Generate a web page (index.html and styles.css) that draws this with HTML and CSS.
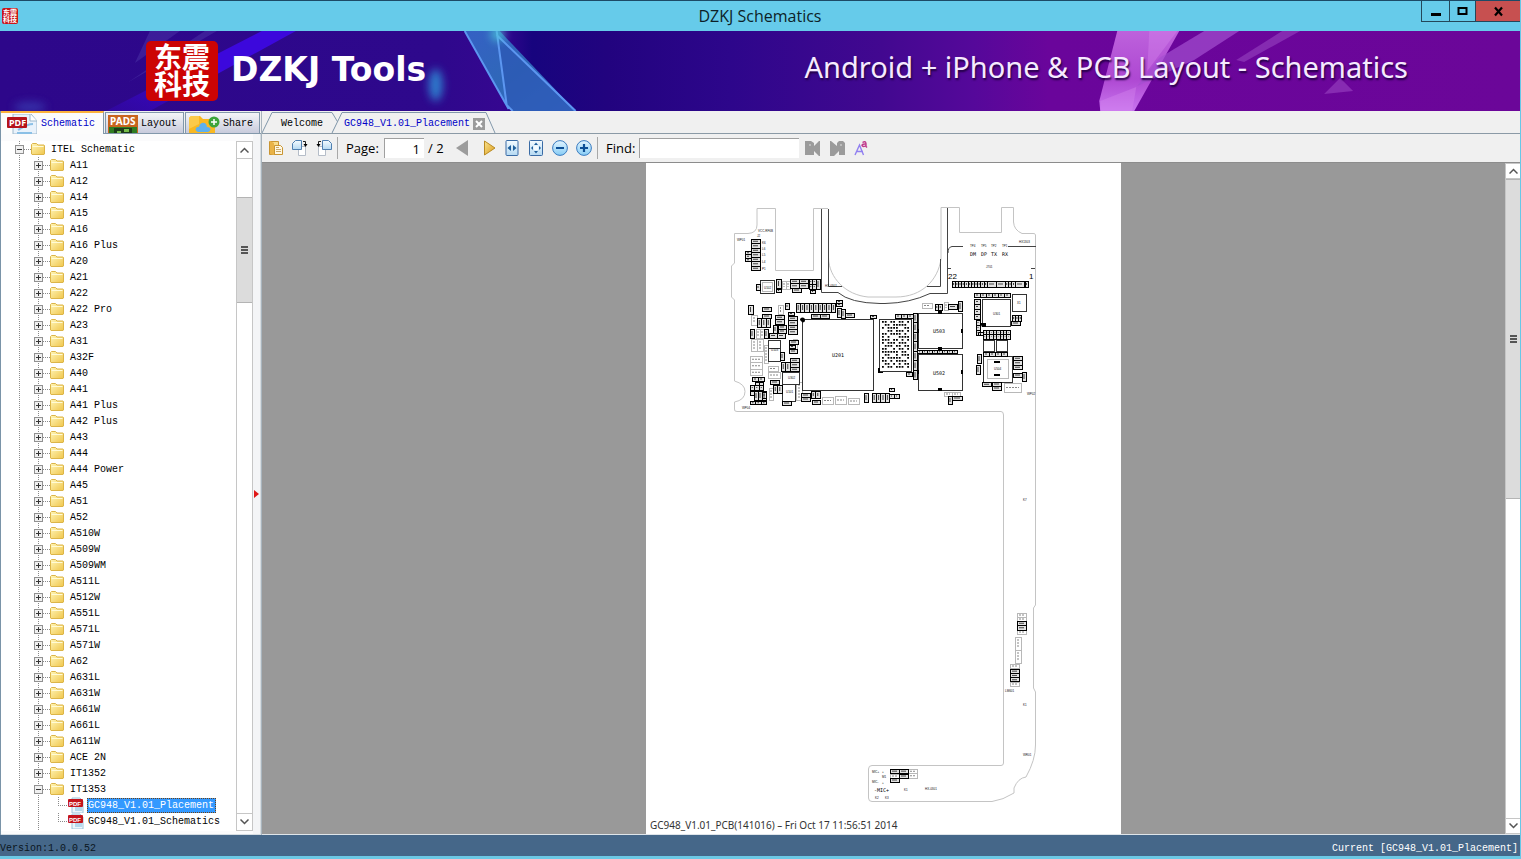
FILE: index.html
```html
<!DOCTYPE html>
<html lang="en">
<head>
<meta charset="utf-8">
<title>DZKJ Schematics</title>
<link rel="stylesheet" href="styles.css">
</head>
<body>
<svg class="defs" aria-hidden="true">
  <defs>
    <linearGradient id="gFolder" x1="0" y1="0" x2="1" y2="1"><stop offset="0" stop-color="#fff6b8"/><stop offset="1" stop-color="#f0c64c"/></linearGradient>
    <linearGradient id="gDoc" x1="0" y1="0" x2="0" y2="1"><stop offset="0" stop-color="#f4fbff"/><stop offset="1" stop-color="#b5d9f2"/></linearGradient>
    <linearGradient id="gBall" x1="0" y1="0" x2="0" y2="1"><stop offset="0" stop-color="#e2f4ff"/><stop offset="1" stop-color="#86ccf5"/></linearGradient>
    <linearGradient id="gPlay" x1="0" y1="0" x2="1" y2="1"><stop offset="0" stop-color="#fbe48e"/><stop offset="1" stop-color="#d99a1c"/></linearGradient>
    <symbol id="folder" viewBox="0 0 14 12"><path d="M.5 11V1.5L1.5.5h4l1.500 1.500h6l.5.5V11l-.5.5H1z" fill="url(#gFolder)" stroke="#dcb548"/><path d="M1.500 3.500h11" stroke="#fffbd8"/></symbol>
    <symbol id="pdf" viewBox="0 0 16 16"><path d="M4 1h8l3 3v12H4z" fill="#edf6fb" stroke="#9cc4dc"/><path d="M7 11h7M7 13h7" stroke="#7dbbe0"/><rect y="2" width="15" height="8" rx="1" fill="#c4141c"/><text x="1" y="9" class="pdf-word">PDF</text></symbol>
  </defs>
</svg>

<header class="titlebar">
  <span class="mini-logo">东震科技</span>
  <h1 class="title">DZKJ Schematics</h1>
  <div class="win-buttons">
    <button class="win-btn" aria-label="Minimize"><svg width="11" height="11"><path d="M1 7h10v3H1z"/></svg></button>
    <button class="win-btn win-max" aria-label="Maximize"><svg width="11" height="11"><path d="M1.500 2h8v6h-8z" fill="none" stroke="#000" stroke-width="2"/></svg></button>
    <button class="win-btn win-close" aria-label="Close"><svg width="11" height="11"><path d="M2 1.500l7 8M9 1.500l-7 8" stroke="#000" stroke-width="2.200"/></svg></button>
  </div>
</header>

<section class="banner">
  <svg class="banner-art" viewBox="0 0 1521 80" preserveAspectRatio="none" aria-hidden="true">
    <defs>
      <linearGradient id="gTri" x1="0" y1="0" x2="1" y2="1"><stop offset="0" stop-color="#3560c4"/><stop offset=".5" stop-color="#2f68b8"/><stop offset="1" stop-color="#3a6fce"/></linearGradient>
      <linearGradient id="gPink" x1="0" y1="0" x2="0" y2="1"><stop offset="0" stop-color="#bd62dc"/><stop offset=".6" stop-color="#ae48d2"/><stop offset="1" stop-color="#c874ee"/></linearGradient>
      <linearGradient id="gBeam" x1="1" y1="0" x2="0" y2="1"><stop offset="0" stop-color="#3c08dc"/><stop offset=".5" stop-color="#3c08dc"/><stop offset="1" stop-color="#3508b8" stop-opacity=".4"/></linearGradient>
      <filter id="blur" x="-2" y="-2" width="5" height="5"><feGaussianBlur stdDeviation="4"/></filter>
    </defs>
    <path d="M262 0h34L150 80h-44z" fill="url(#gBeam)"/>
    <path d="M150 0h30l-45 32zM205 0l-78 52 90-52z" fill="#5a48b4" opacity=".35"/>
    <ellipse cx="436" cy="54" rx="7" ry="16" fill="#2f8fd8" opacity=".85" filter="url(#blur)"/>
    <ellipse cx="30" cy="76" rx="16" ry="5" fill="#3c50c0" opacity=".6" filter="url(#blur)"/>
    <path d="M465 0h35l76 80h-64l-3-3z" fill="url(#gTri)"/>
    <path d="M497 3l10 72 5 5h62z" fill="#2c58b4" opacity=".75"/>
    <path d="M465 0l44 78M497 0l10 74 6 6M497 4l79 76" fill="none" stroke="#5c96f0" stroke-width="2"/>
    <circle cx="498" cy="3" r="7" fill="#4fd2dc" opacity=".75" filter="url(#blur)"/>
    <path d="M1118 0h62l-45 80h-34l-1-10z" fill="url(#gPink)"/>
    <path d="M1101 70l36-14-4 24h-32zM1150 0h28l-30 40z" fill="#db8cf2" opacity=".35"/>
    <path d="M1205 0h35l-45 29-57 26 22-28z" fill="#a450d0" opacity=".7"/>
    <path d="M1283 0h18l-56 31-8-2z" fill="#a050c8" opacity=".5"/>
    <path d="M1341 47l13 13-29 3z" fill="#8f35b8" opacity=".8"/>
  </svg>
  <div class="logo">东震科技</div>
  <strong class="brand">DZKJ Tools</strong>
  <span class="tagline">Android + iPhone &amp; PCB Layout - Schematics</span>
</section>

<main class="workspace">
  <aside class="side">
    <nav class="side-tabs">
      <button class="side-tab active"><svg width="30" height="20" viewBox="0 0 30 20"><path d="M6 0h18l6 7v13H6z" fill="#e9f2fb" stroke="#9db8cc"/><path d="M23 0v7h7" fill="#fff" stroke="#9db8cc"/><path d="M11 16c5-3 9-6 15-6M10 19h15" stroke="#8bc0e6" stroke-width="2" fill="none"/><rect y="3" width="20" height="11" rx="1" fill="#b5121b"/><text x="2" y="12" class="pdf-tab">PDF</text></svg>Schematic</button>
      <button class="side-tab"><svg width="30" height="19" viewBox="0 0 30 19"><path d="M0 0h30v19H0z" fill="#c8641e"/><path d="M1 12h28v7H1z" fill="#2f7d22"/><path d="M6 13h18v6H6z" fill="#1d3b1a"/><path d="M9 16h4v3H9zM16 14h5v3h-5z" fill="#76bd4b"/><text x="2" y="10" class="pads-word">PADS</text></svg>Layout</button>
      <button class="side-tab share"><svg width="32" height="19" viewBox="0 0 32 19"><path d="M1 3l2-2h9l3 3h12v15H1z" fill="#f9b821"/><path d="M1 3l2-2h8v8L1 14z" fill="#fbca4a"/><path d="M10 17c-5-2-1-6 1-5 1-6 8-5 8 0 5 0 4 4 1 5z" fill="#5eb0ee"/><circle cx="26" cy="7" r="5.500" fill="#3da43b"/><path d="M23 7h6M26 4v6" stroke="#fff" stroke-width="1.500"/></svg>Share</button>
    </nav>
    <div class="side-body">
      <div class="tree-wrap">
        <ul class="tree" id="tree"></ul>
        <div class="scroll tree-scroll">
          <button class="arrow" aria-label="Scroll up"><svg width="9" height="6"><path d="M.5 5.500l4-4 4 4" fill="none" stroke="#555" stroke-width="1.500"/></svg></button>
          <div class="track"><div class="thumb"></div></div>
          <button class="arrow" aria-label="Scroll down"><svg width="9" height="6"><path d="M.5.5l4 4 4-4" fill="none" stroke="#555" stroke-width="1.500"/></svg></button>
        </div>
      </div>
      <button class="splitter" aria-label="Collapse panel"><svg width="5" height="8"><path d="M0 0l5 4-5 4z" fill="#e01818"/></svg></button>
    </div>
  </aside>

  <section class="doc">
    <nav class="doc-tabs">
      <button class="doc-tab"><svg class="tab-shape" width="78" height="21" aria-hidden="true"><path d="M0 21L10 .5h60l6 10-6 10.500" fill="#f0f0f0" stroke="#8298ab"/></svg><span>Welcome</span></button>
      <div class="doc-tab current"><svg class="tab-shape" width="166" height="21" aria-hidden="true"><path d="M0 21L10 .5h144L163 21" fill="#f0f0f0" stroke="#8298ab"/></svg><span>GC948_V1.01_Placement</span><button class="tab-close" aria-label="Close tab"><svg width="12" height="12"><path d="M3 3l6 6M9 3L3 9" stroke="#fff" stroke-width="2"/></svg></button></div>
    </nav>
    <div class="toolbar">
      <button class="tool" aria-label="Open"><svg width="16" height="16"><path d="M1.500 1.500h9v13h-9z" fill="#f8dc8a" stroke="#c99532"/><path d="M2 1l4 2v12l-4-1z" fill="#e9b347"/><path d="M6.500 5.500h6l2 2v7h-8z" fill="#fff8e4" stroke="#c99532"/><path d="M8 9.500h5M8 11.500h5M8 7.500h3" stroke="#c9a96a"/></svg></button>
      <button class="tool" aria-label="Rotate left"><svg width="18" height="16"><path d="M7.500 6.500h7v9h-7z" fill="#fff" stroke="#b5bdc8"/><path d="M4.500.5h6v9h-9v-6z" fill="url(#gDoc)" stroke="#4f7fb0"/><path d="M12 1.500h2.500V4" fill="none" stroke="#222"/><path d="M12.500 4h4l-2 3z"/></svg></button>
      <button class="tool" aria-label="Rotate right"><svg width="18" height="16"><path d="M3.500 6.500h7v9h-7z" fill="#fff" stroke="#b5bdc8"/><path d="M7.500.5h6l3 3v6h-9z" fill="url(#gDoc)" stroke="#4f7fb0"/><path d="M6 1.500H3.500V4" fill="none" stroke="#222"/><path d="M1.500 4h4l-2 3z"/></svg></button>
      <span class="sep"></span>
      <label class="tool-label page-label" for="page">Page:</label>
      <input class="field page-field" id="page" value="1">
      <span class="page-total">/ 2</span>
      <button class="tool" aria-label="Previous page"><svg width="12" height="16"><path d="M12 0v16L0 8z" fill="#9c9c9c"/></svg></button>
      <button class="tool next" aria-label="Next page"><svg width="12" height="16"><path d="M.5 1v14l10.500-7z" fill="url(#gPlay)" stroke="#b98a23"/></svg></button>
      <button class="tool" aria-label="Fit width"><svg width="14" height="16"><rect x="1" y=".5" width="12" height="15" rx="1" fill="url(#gDoc)" stroke="#3a6ba5"/><path d="M6 5v6L2.500 8zM8 5v6l3.500-3z" fill="#1f5f9c"/></svg></button>
      <button class="tool" aria-label="Fit page"><svg width="14" height="16"><rect x=".5" y=".5" width="13" height="15" rx="1" fill="url(#gDoc)" stroke="#3a6ba5"/><path d="M7 2.500l2 2.500H5zM7 13.500L5 11h4zM2 8l2-2v4zM12 8l-2-2v4z" fill="#1f5f9c"/><circle cx="7" cy="8" r="2.500" fill="#f4fbff"/></svg></button>
      <button class="tool" aria-label="Zoom out"><svg width="16" height="16"><circle cx="8" cy="8" r="7.400" fill="url(#gBall)" stroke="#3b7cc0"/><path d="M4 8h8" stroke="#0d4f96" stroke-width="2"/></svg></button>
      <button class="tool" aria-label="Zoom in"><svg width="16" height="16"><circle cx="8" cy="8" r="7.400" fill="url(#gBall)" stroke="#3b7cc0"/><path d="M4 8h8M8 4v8" stroke="#0d4f96" stroke-width="2.200"/></svg></button>
      <span class="sep"></span>
      <label class="tool-label find-label" for="find">Find:</label>
      <input class="field find-field" id="find">
      <button class="tool" aria-label="Find previous"><svg width="16" height="16"><path d="M0 1h6l3 2v3l5-5h1v15h-1l-5-5v4H0z" fill="#9b9b9b"/><path d="M4 5h2" stroke="#ddd"/></svg></button>
      <button class="tool" aria-label="Find next"><svg width="16" height="16"><path d="M16 15h-6v-4l-5 5H1V1h1l6 5V3l2-2h4l2 2z" fill="#9b9b9b"/><path d="M11 5h2" stroke="#ddd"/></svg></button>
      <button class="tool" aria-label="Match case"><svg width="16" height="16"><path d="M2 15L6.500 5l4 10M4 11.500h6" fill="none" stroke="#9180f0" stroke-width="1.400"/><path d="M9.500 2.500q3-2 3.500 1v3l1 1M13 4q-4-.3-4 1.500 1.500 2 4 0" fill="none" stroke="#c03a8c" stroke-width="1.400"/></svg></button>
    </div>
    <div class="viewer">
      <div class="canvas">
        <svg class="page" viewBox="646 163 475 671" role="img" aria-label="GC948 V1.01 PCB placement">
          <path class="outline" d="M828 208.500H813.500V270.500H775.500V208.500H757V225Q757 233 748 233.500H734.500V263L731.500 266V297L734.500 300V381Q745 384 745 391.500Q745 400 734.500 402V409Q734 411.500 737 411.500H1001Q1003.500 411.500 1003.500 415V763Q1003.500 765.500 1001 765.500H872Q868.500 765.500 868.500 769V798Q868.500 801.500 872 801.500H992Q1003 800 1014 793V788Q1018 778 1026 777Q1035.500 760 1035.500 745V692L1033.500 688V608L1035.500 605V235Q1035 233 1033 233.500H1022Q1014 230 1013.500 222V207.500H1001.500V232.500H959.500V207.500H941V259C938 280 922 297 896 297H868C846 295 829 278 828.500 258"/>
          <path class="trace" d="M821.500 209V292.500H838Q850 303 880 303.500H885Q910 303 930 293.500H947.500V208M828.500 209V286.500H842M940.500 259V286.500H927M948 253Q948 247 952 246.500H963M1008 246.500H1036M948 268.500h3M1031 268.500h4"/>
          <g id="parts"></g>
          <path d="M800 320a2.500 2.500 0 1 1 2.500 2.500zM938 311h4v3h-4zM938 347h4v3h-4zM938 388h4v3h-4zM917 329h2v4h-2zM961 329h2v4h-2zM917 370h2v4h-2zM961 370h2v4h-2zM980 323h6v4h-4zM994 361h6v2h-6zM994 374h6v2h-6zM878 368h2v4h3v1h-5z"/>
          <g class="chip-names">
            <text x="832" y="357">U201</text><text x="933" y="333">U503</text><text x="933" y="375">U502</text>
            <text x="970" y="256">DM</text><text x="981" y="256">DP</text><text x="991" y="256">TX</text><text x="1002" y="256">RX</text>
            <text x="874" y="792">-MIC+</text>
          </g>
          <g class="pins"><text x="948" y="279">22</text><text x="1029" y="279">1</text></g>
          <g class="tiny">
            <text x="737" y="241">WP01</text><text x="758" y="232">VCC-RF6B</text><text x="757" y="237">J2</text><text x="762" y="244">K6</text><text x="762" y="250">L6</text><text x="762" y="256">L5</text><text x="762" y="263">L4</text><text x="762" y="270">P1</text>
            <text x="970" y="247">TP4</text><text x="981" y="247">TP5</text><text x="991" y="247">TP2</text><text x="1002" y="247">TP1</text><text x="1019" y="243">HX1303</text><text x="986" y="268">J701</text><text x="825" y="287">HX-0301</text>
            <text x="742" y="409">WP04</text><text x="1027" y="395">WP02</text><text x="1023" y="501">K7</text><text x="1023" y="706">K1</text><text x="1005" y="692">LM601</text><text x="1023" y="756">WR01</text>
            <text x="872" y="773">MIC+</text><text x="872" y="783">MIC-</text><text x="882" y="773">+</text><text x="882" y="778">M1</text><text x="882" y="784">+</text><text x="904" y="791">K1</text><text x="925" y="790">HX-0301</text><text x="875" y="799">K2</text><text x="885" y="799">K3</text>
            <text x="993" y="315">U301</text><text x="994" y="370">U504</text><text x="1017" y="304">X1</text><text x="764" y="289">U102</text><text x="771" y="351">U103</text><text x="788" y="379">U302</text><text x="786" y="393">U101</text>
          </g>
          <text class="caption" x="650" y="829">GC948_V1.01_PCB(141016) – Fri Oct 17 11:56:51 2014</text>
        </svg>
      </div>
      <div class="scroll doc-scroll">
        <button class="arrow" aria-label="Scroll up"><svg width="9" height="6"><path d="M.5 5.500l4-4 4 4" fill="none" stroke="#555" stroke-width="1.500"/></svg></button>
        <div class="track"><div class="thumb"></div></div>
        <button class="arrow" aria-label="Scroll down"><svg width="9" height="6"><path d="M.5.5l4 4 4-4" fill="none" stroke="#555" stroke-width="1.500"/></svg></button>
      </div>
    </div>
  </section>
</main>

<footer class="status"><span class="version">Version:1.0.0.52</span><span>Current [GC948_V1.01_Placement]</span></footer>
<script src="script.js"></script>
</body>
</html>
```
FILE: styles.css
```css
* { box-sizing: border-box; }
html, body { height: 100%; }
body {
  margin: 0;
  display: grid;
  grid-template-rows: 31px 80px minmax(0, 1fr) 24px;
  border-right: 1px solid #66c8e8;
  background: #f0f0f0;
  color: #000;
  font: 10px/16px "Liberation Mono", "Noto Sans CJK SC", monospace;
  overflow: hidden;
}
button { font: inherit; color: inherit; border: 0; padding: 0; margin: 0; background: none; }
svg { display: block; flex: none; }
.defs { position: absolute; width: 0; height: 0; }

/* title bar */
.titlebar {
  display: grid;
  grid-template-columns: 1fr auto 1fr;
  align-items: center;
  background: #66cbea;
  border-top: 1px solid #1d4a66;
}
.mini-logo {
  justify-self: start;
  margin-left: 2px;
  width: 16px;
  height: 16px;
  padding: 1px;
  border-radius: 2px;
  background: #c9151b;
  color: #fff;
  font: bold 7px/7px "Noto Sans CJK SC", sans-serif;
  word-break: break-all;
}
.title { margin: 0; font: 16px/28px "Open Sans", "Noto Sans", sans-serif; color: #0d1f28; }
.win-buttons { justify-self: end; align-self: start; display: flex; height: 21px; border: 1px solid #24475a; border-top: 0; border-right: 0; }
.win-btn { width: 28px; display: grid; place-items: center; border-right: 1px solid #24475a; }
.win-max { width: 26px; }
.win-close { width: 44px; background: #c75050; border-right: 0; }

/* banner */
.banner {
  position: relative;
  display: flex;
  align-items: center;
  padding: 0 112px 0 146px;
  background: linear-gradient(90deg, #2d078a 0%, #2e088c 29%, #350790 33%, #17047e 35%, #22037f 40%, #2d068b 48%, #420890 58%, #55089a 64%, #6a059b 69%, #6b0699 100%);
  color: #fff;
  overflow: hidden;
}
.banner-art { position: absolute; inset: 0; width: 100%; height: 100%; }
.logo {
  position: relative;
  width: 72px;
  height: 60px;
  border-radius: 5px;
  background: #cc0404;
  font: bold 28px/27px "Noto Sans CJK SC", sans-serif;
  padding: 2px 7px 0 8px;
  word-break: break-all;
}
.brand { position: relative; margin-left: 13px; padding-bottom: 2px; font: bold 33px/40px "DejaVu Sans", sans-serif; white-space: nowrap; }
.tagline { position: relative; margin-left: auto; padding-bottom: 9px; font: 29px/40px "Noto Sans", sans-serif; color: #f6eaff; text-shadow: 1px 2px 2px #220044; white-space: nowrap; }

/* workspace */
.workspace { display: flex; min-height: 0; }
.side { width: 261px; flex: none; display: flex; flex-direction: column; border-left: 1px solid #7a94a8; }
.side-tabs { display: flex; align-items: flex-end; height: 23px; gap: 1px; border-bottom: 1px solid #8298ab; }
.side-tab {
  display: flex;
  align-items: center;
  gap: 3px;
  height: 21px;
  width: 79px;
  padding: 2px 0 0 2px;
  border: 1px solid #8298ab;
  border-bottom: 0;
  background: linear-gradient(#f4f5f8, #c8cbdc);
  font-size: 10px;
  overflow: hidden;
}
.side-tab.active { width: 103px; height: 23px; padding: 0 0 0 6px; gap: 4px; border-left: 0; border-top: 2px solid #fcb23c; background: #fcfcfc; color: #0000c8; margin-bottom: -1px; }
.side-tab.share { width: 75px; }
.side-body { flex: 1; min-height: 0; display: flex; background: #fbfbfc; border-bottom: 1px solid #d5dde3; }
.tree-wrap { flex: 1; display: flex; margin: 7px 0 3px; min-width: 0; background: #fff; }
.splitter { width: 8px; display: grid; place-items: center start; background: #f4f5f7; border-right: 1px solid #d6dce0; padding: 20px 0 0 1px; }

.tree { flex: 1; margin: 0; padding: 0; list-style: none; overflow: hidden; }
.tree li { display: flex; align-items: center; height: 16px; padding-left: 14px; white-space: pre;
  background: repeating-linear-gradient(#8a8a8a 0 1px, transparent 1px 2px) 18px 0 / 1px 100% no-repeat; }
.tree .child { padding-left: 33px;
  background: repeating-linear-gradient(#8a8a8a 0 1px, transparent 1px 2px) 18px 0 / 1px 100% no-repeat,
    repeating-linear-gradient(#8a8a8a 0 1px, transparent 1px 2px) 37px 0 / 1px 100% no-repeat; }
.tree .leaf { padding-left: 57px;
  background: repeating-linear-gradient(#8a8a8a 0 1px, transparent 1px 2px) 18px 0 / 1px 100% no-repeat,
    repeating-linear-gradient(#8a8a8a 0 1px, transparent 1px 2px) 37px 0 / 1px 100% no-repeat,
    repeating-linear-gradient(#8a8a8a 0 1px, transparent 1px 2px) 57px 0 / 1px 8px no-repeat; }
.toggle { width: 9px; height: 9px; border: 1px solid #919191; background: linear-gradient(#333, #333) center / 5px 1px no-repeat, #f0f0f0; flex: none; }
.toggle.plus { background: linear-gradient(#333, #333) center / 5px 1px no-repeat, linear-gradient(#333, #333) center / 1px 5px no-repeat, #f0f0f0; }
.link { width: 7px; height: 1px; flex: none; background: repeating-linear-gradient(90deg, #8a8a8a 0 1px, transparent 1px 2px); }
.leaf .link { width: 10px; }
.folder { width: 14px; height: 12px; }
.pdf { width: 16px; height: 16px; }
.label { margin-left: 4px; padding: 0 2px; line-height: 15px; }
.leaf .label { margin-left: 3px; padding: 0 1px; }
.selected .label { background: #3399ff; color: #fff; outline: 1px dotted #704010; outline-offset: -1px; padding-right: 2px; }
.pdf-word { font: bold 6px "Liberation Sans", sans-serif; fill: #fff; }
.pdf-tab { font: bold 9px "Noto Sans", sans-serif; fill: #fff; }
.pads-word { font: bold 10px "Noto Sans", sans-serif; fill: #fff; }

/* scroll bars */
.scroll { width: 17px; flex: none; display: flex; flex-direction: column; background: #fff; border: 1px solid #c6c6c6; }
.arrow { height: 16px; display: grid; place-items: center; flex: none; background: #fff; }
.track { flex: 1; border: solid #c6c6c6; border-width: 1px 0; }
.thumb { position: relative; background: #dcdcdc; border: solid #b4b4b4; border-width: 1px 0; display: grid; place-items: center; }
.thumb::after { content: ""; width: 7px; height: 8px; background: repeating-linear-gradient(#555 0 2px, transparent 2px 3px); }
.tree-scroll .track { padding-top: 38px; }
.tree-scroll .thumb { height: 106px; }
.doc-scroll { width: 15px; border-right: 0; }
.doc-scroll .arrow { height: 14px; }
.doc-scroll .thumb { height: 50%; }

/* document area */
.doc { flex: 1; min-width: 0; display: flex; flex-direction: column; border-left: 1px solid #a8b4bd; }
.doc-tabs { display: flex; align-items: flex-end; height: 23px; border-bottom: 1px solid #8b9aa6; }
.doc-tab { position: relative; height: 21px; padding: 2px 0 0 19px; width: 70px; text-align: left; line-height: 20px; }
.doc-tab span { position: relative; }
.tab-shape { position: absolute; left: 0; top: 0; }
.doc-tab.current { display: flex; align-items: center; gap: 3px; width: 166px; padding-left: 12px; color: #0000c8; }
.tab-close { position: relative; width: 12px; height: 12px; background: #9b9b9b; }
.toolbar { display: flex; align-items: center; height: 28px; padding-left: 5px; background: #f0f0f0; font: 13px/20px "Open Sans", "Noto Sans", sans-serif; }
.tool { width: 24px; height: 24px; display: grid; place-items: center; flex: none; padding-right: 6px; }
.next { margin: 0 -2px 0 4px; }
.sep { width: 1px; height: 22px; background: #a8a8a8; margin: 0 8px 0 -2px; }
.field { height: 20px; border: solid #a0a0a0; border-width: 1px 0 0 1px; background: #fff; padding: 0 4px; font: inherit; outline: 0; border-radius: 0; }
.page-label { width: 38px; }
.page-field { width: 40px; text-align: right; }
.page-total { padding: 0 9px 0 4px; width: 29px; white-space: nowrap; }
.find-label { width: 33px; }
.find-field { width: 160px; margin-right: 5px; }
.viewer { flex: 1; min-height: 0; display: flex; border-top: 1px solid #8c8c8c; background: #999; border-bottom: 1px solid #dfe5ea; }
.canvas { flex: 1; min-width: 0; display: flex; justify-content: center; }
.page { height: 100%; aspect-ratio: 475 / 671; background: #fff; }

.outline { fill: none; stroke: #c4c4c4; }
.trace { fill: none; stroke: #444; }
.dark { fill: #e2e2e2; stroke: #000; shape-rendering: crispEdges; }
.box { fill: #fff; stroke: #333; shape-rendering: crispEdges; }
.light { fill: none; stroke: #b8b8b8; shape-rendering: crispEdges; }
.mark { fill: none; stroke: #444; stroke-width: 1; }
.mark-light { fill: none; stroke: #888; stroke-width: 1; stroke-dasharray: 2 1; }
.balls { fill: #000; }
.chip-names { font: 5px "DejaVu Sans Mono", monospace; }
.pins { font: 8px "Liberation Sans", sans-serif; }
.tiny { font: 3px "Liberation Sans", sans-serif; fill: #111; }
.caption { font: 10px "Noto Sans", sans-serif; fill: #333; white-space: pre; }

/* status bar */
.status { display: flex; justify-content: space-between; padding: 6px 2px 0 0; background: #456789; border-bottom: 3px solid #6cc8e4; color: #fff; }
.version { color: #0b1620; }
```
FILE: script.js
```js
const folders = ["A11", "A12", "A14", "A15", "A16", "A16 Plus", "A20", "A21", "A22", "A22 Pro", "A23", "A31", "A32F", "A40", "A41", "A41 Plus", "A42 Plus", "A43", "A44", "A44 Power", "A45", "A51", "A52", "A510W", "A509W", "A509WM", "A511L", "A512W", "A551L", "A571L", "A571W", "A62", "A631L", "A631W", "A661W", "A661L", "A611W", "ACE 2N", "IT1352"];

const node = (kind, label, open) =>
  `<li class="${kind}"><button class="toggle ${open ? "" : "plus"}" aria-label="Toggle ${label}"></button><span class="link"></span><svg class="folder"><use href="#folder"/></svg><span class="label">${label}</span></li>`;
const leaf = (label, selected) =>
  `<li class="leaf ${selected ? "selected" : ""}"><span class="link"></span><svg class="pdf"><use href="#pdf"/></svg><span class="label">${label}</span></li>`;

document.getElementById("tree").innerHTML =
  node("root", "ITEL Schematic", true) +
  folders.map(f => node("child", f, false)).join("") +
  node("child", "IT1353", true) +
  leaf("GC948_V1.01_Placement", true) +
  leaf("GC948_V1.01_Schematics", false) +
  node("child", "", false);

// Component groups: x, y, columns, rows, cell width, cell height
const dark = [
  [751,239,1,7,9,4.5],[745,251,1,3,6,3.5],[756,284,1,1,4,6],[776,279,1,1,5,9],[776,289,1,1,5,3],
  [790,279,2,2,9,4.5],[792,288,1,1,9,4],[809,279,2,2,3.5,5],[816,279,1,1,4,10],[810,290,1,1,5,3],
  [748,305,1,1,5,9],[785,303,1,1,4,6],[762,307,1,1,9,4],[762,314,1,1,9,4],[757,318,3,1,4.5,9],
  [750,329,1,1,4,9],[764,329,1,1,4,9],[769,333,2,1,8,5],[775,315,1,2,9,4.5],[773,325,1,1,4,8],[778,325,1,2,8,4],
  [788,312,1,1,6,3],[788,316,1,4,9,4.5],[789,340,1,1,9,4],[789,345,1,1,6,3],[789,349,1,1,8,4],
  [796,303,9,1,4.4,9],[836,300,1,2,6,3],[811,314,2,1,9,4],[837,308,1,1,4,9],[841,309,1,1,4,9],[845,313,1,1,9,4],[870,315,1,1,6,3],
  [780,352,1,1,4,8],[781,362,2,1,4.5,9],[790,358,1,3,9,4.5],[770,380,1,1,9,4],[773,385,2,1,4.5,8],[782,401,1,1,9,4],
  [752,377,2,1,6,4],[750,385,3,1,4.500,5],[755,382,2,1,4,3],[754,391,3,1,4,9],[750,391,1,1,4,4],[750,401,3,1,5.500,3.500],[762,392,1,1,4,6],
  [801,393,1,2,9,4],[811,391,2,1,4.5,7],[812,400,1,1,8,4],[864,393,1,1,4,9],[872,393,4,1,4.4,9],[889,388,1,1,5,3],[889,394,2,1,5,4],
  [895,314,3,1,6,4],[913,313,1,7,4,9.5],[917,350,8,1,5,3.5],[906,372,1,1,6,4],[935,304,2,1,3.5,6],[948,304,1,1,9,5],[958,301,1,1,4,10],
  [974,293,6,1,6,4],[974,299,1,4,6,5],[976,320,1,3,4,5],[983,330,8,2,3.4,4.5],[978,332,1,1,5,3],
  [1012,315,3,1,3.3,6],[1011,321,1,1,9,4],[983,352,4,1,6,4],[1013,356,1,3,9,4.5],[1013,373,1,1,9,4],[1022,372,1,1,4,9],
  [977,354,1,1,4,9],[976,365,1,1,4,9],[982,382,1,1,9,4.500],[992,382,1,2,9,4],[948,396,1,1,4,8],[952,396,1,1,10,4],
  [952,281,11,1,3.2,6],[987,281,2,1,9,6],[1005,281,3,1,3.4,6],[1015,281,1,1,9,6],[1025,281,1,1,3,6],
  [1017,621,1,2,9,4.5],[1010,669,1,3,9,4.3],[890,769,2,1,9,4.3],[899,774,1,1,9,4],[890,778,1,1,9,4]
];
const light = [
  [782,281,2,1,4,8],[778,305,1,1,5,9],[756,329,2,1,4,9],[751,315,1,1,6,10],[751,339,2,1,6,12],[750,356,1,3,12,6.500],
  [768,366,1,1,10,5],[768,372,1,1,12,6],[793,339,1,1,4,11],[764,345,1,1,4,18],[796,382,1,1,6,18],[769,388,1,1,4,12],
  [822,397,1,1,11,7],[835,396,1,1,11,8],[848,398,1,1,11,6],[922,303,1,1,10,5],[944,302,1,1,4,8],[1004,383,1,1,17,9],
  [944,392,2,1,8,4],[1017,613,1,2,9,4],[1017,630,1,1,9,4],[1015,637,1,2,6,13],[1010,664,1,1,9,4],[1010,682,1,1,9,4],
  [908,769,1,2,9,4.5],[890,774,1,1,9,4]
];
const boxes = [
  [802,319,71,71],[879,319,32,52],[918,313,44,35],[918,354,44,36],[982,299,28,27],[1012,294,14,17],[983,356,29,26],
  [983,340,11,11],[996,340,11,11],[760,280,14,13],[768,340,12,8],[768,348,12,13],[782,372,17,12],[782,384,13,17]
];
const insets = [[987,359,21,19],[762,282,10,9]];

const cells = groups => groups.flatMap(([x, y, c, r, w, h]) =>
  Array.from({ length: c * r }, (_, i) => [x + (i % c) * w, y + Math.floor(i / c) * h, w, h]));
const outline = list => list.map(([x, y, w, h]) => `M${x} ${y}h${w}v${h}h${-w}z`).join("");
const marks = list => list.map(([x, y, w, h]) =>
  w > h ? `M${x + 2} ${y + h / 2}h${w - 4}` : `M${x + w / 2} ${y + 2}v${h - 4}`).join("");

// Ball grid: one hex row mask per line, ten columns
const grid = [0x2db, 0x1f6, 0x33d, 0x2ec, 0x17b, 0x3c5, 0x2b7, 0x1dd, 0x36e, 0x2d3, 0x1bf, 0x3a6, 0x27d, 0x1eb, 0x356, 0x2ed];
let balls = "";
grid.forEach((mask, r) => {
  for (let c = 0; c < 10; c++) {
    if (mask >> c & 1) balls += `M${882 + c * 2.8} ${321 + r * 3}h1.800v1.800h-1.800z`;
  }
});
const d = cells(dark), l = cells(light);
document.getElementById("parts").innerHTML =
  `<path class="light" d="${outline(l)}"/><path class="mark-light" d="${marks(l)}"/>` +
  `<path class="box" d="${outline(boxes)}"/><path class="light" d="${outline(insets)}"/>` +
  `<path class="dark" d="${outline(d)}"/>` +
  `<path class="mark" d="${marks(d)}"/><path class="balls" d="${balls}"/>`;
```
